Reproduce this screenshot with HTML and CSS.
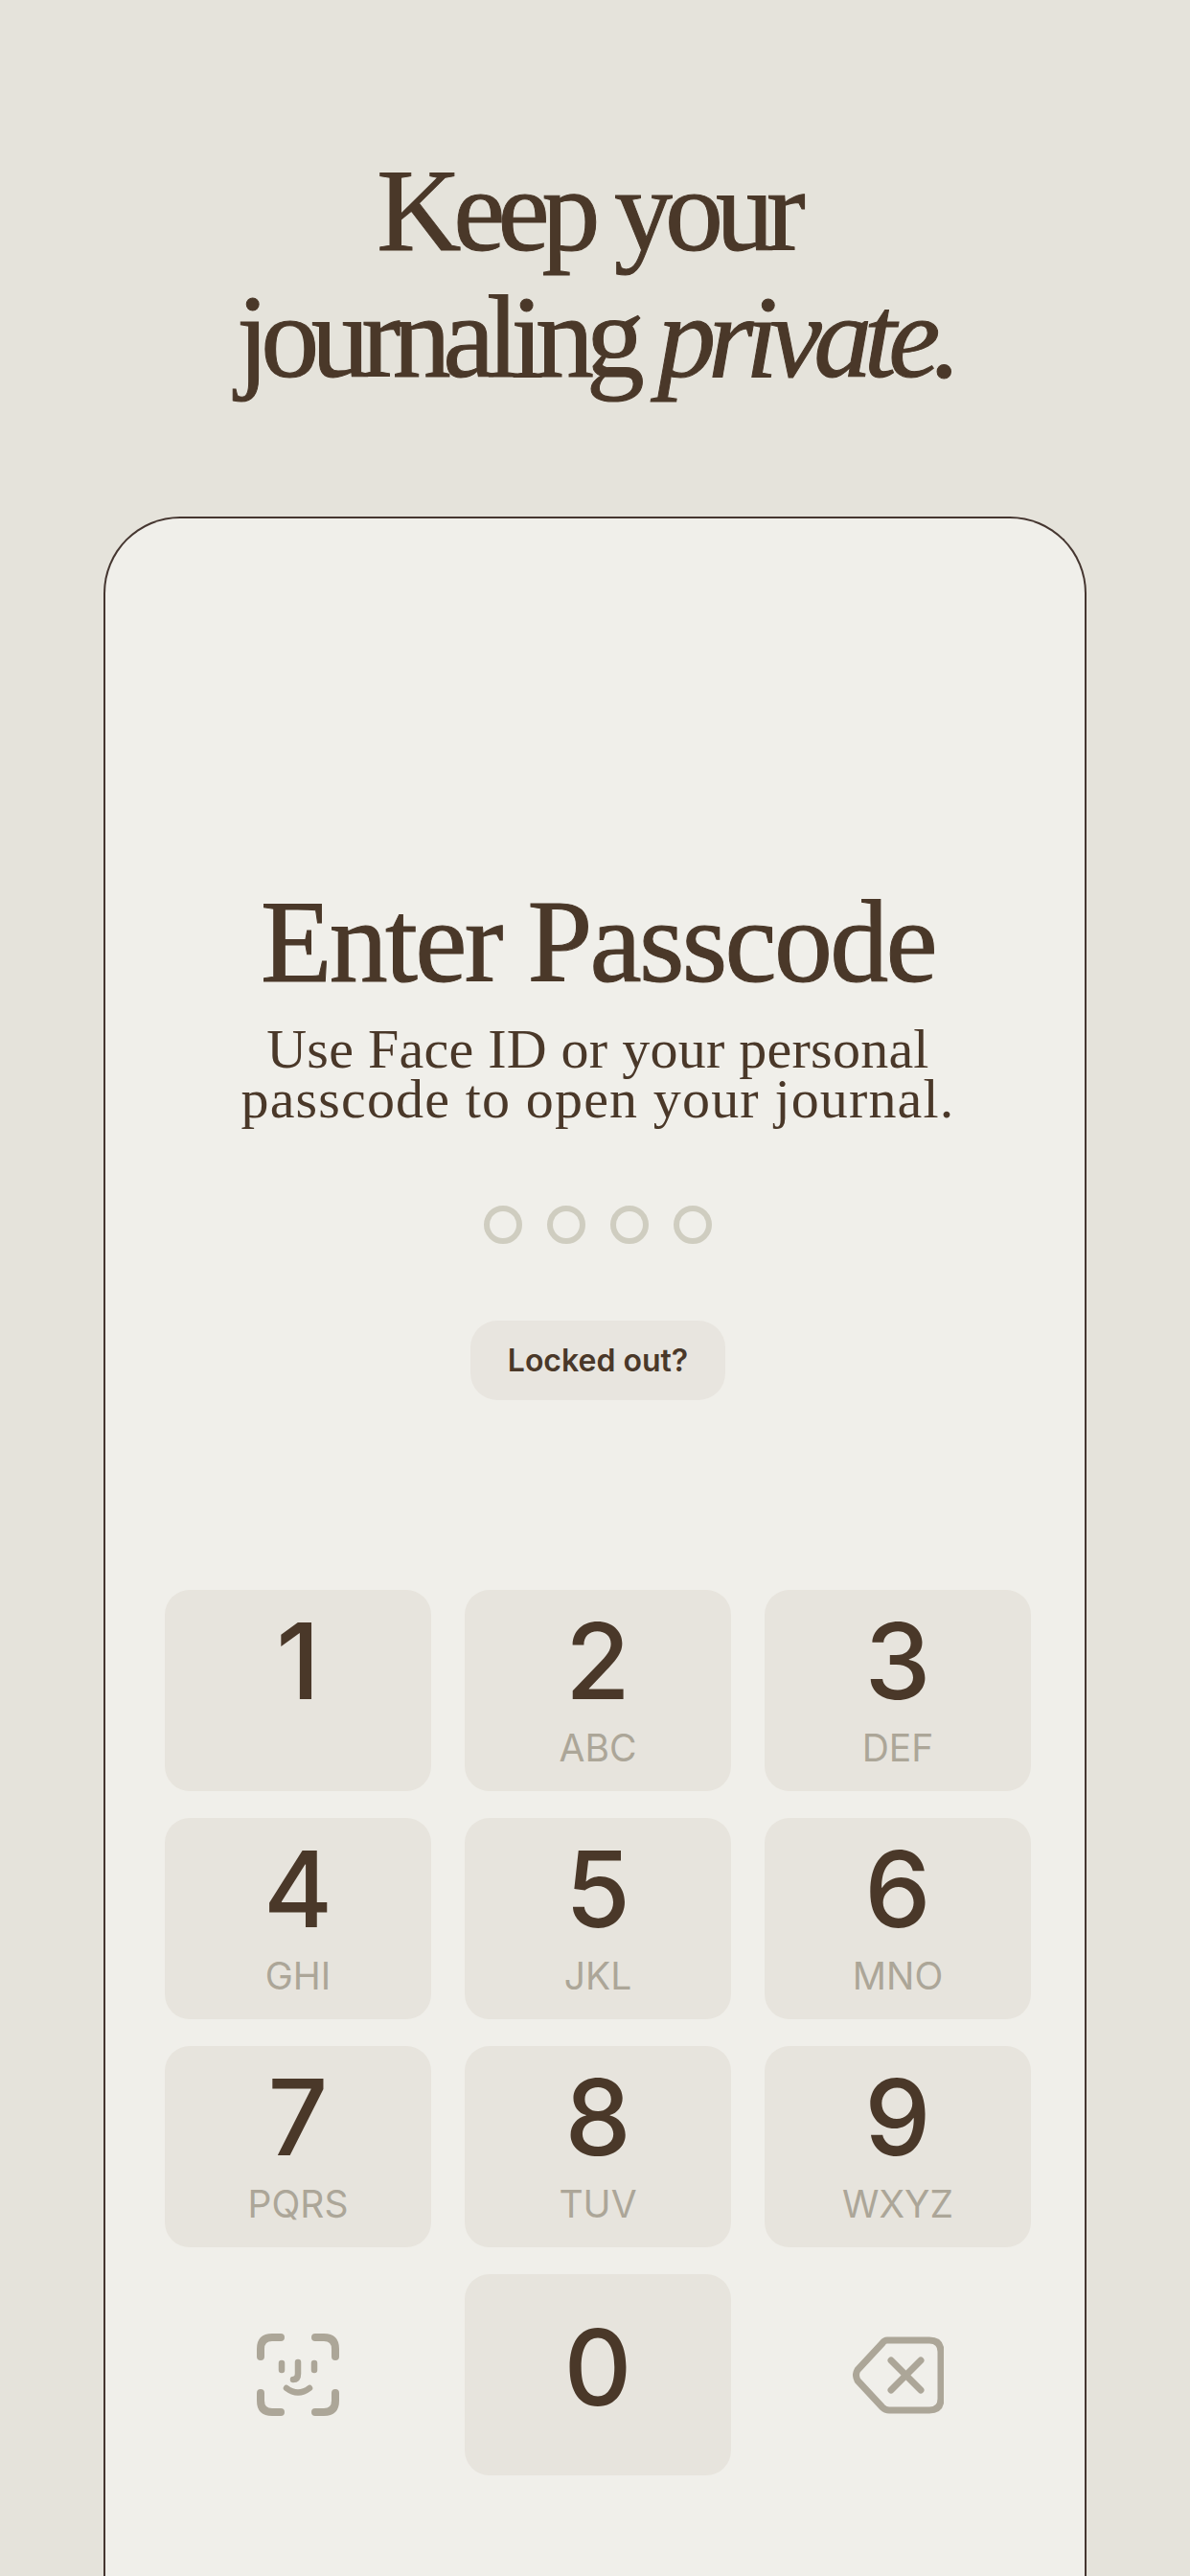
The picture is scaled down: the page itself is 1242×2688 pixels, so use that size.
FILE: index.html
```html
<!DOCTYPE html>
<html lang="en">
<head>
<meta charset="utf-8">
<title>Enter Passcode</title>
<link rel="stylesheet" href="styles.css">
</head>
<body>
<main class="page">
  <h1 class="headline"><span class="headline-first">Keep your</span><span class="headline-second">journaling <em>private.</em></span></h1>
  <section class="card">
    <h2 class="title">Enter Passcode</h2>
    <p class="subtitle"><span class="sub-first">Use Face ID or your personal</span><span class="sub-second">passcode to open your journal.</span></p>
    <div class="dots"><span class="dot"></span><span class="dot"></span><span class="dot"></span><span class="dot"></span></div>
    <button class="locked">Locked out?</button>
    <div class="keypad">
      <div class="key"><span class="digit">1</span></div>
      <div class="key"><span class="digit">2</span><span class="letters">ABC</span></div>
      <div class="key"><span class="digit">3</span><span class="letters">DEF</span></div>
      <div class="key"><span class="digit">4</span><span class="letters">GHI</span></div>
      <div class="key"><span class="digit">5</span><span class="letters">JKL</span></div>
      <div class="key"><span class="digit">6</span><span class="letters">MNO</span></div>
      <div class="key"><span class="digit">7</span><span class="letters">PQRS</span></div>
      <div class="key"><span class="digit">8</span><span class="letters">TUV</span></div>
      <div class="key"><span class="digit">9</span><span class="letters">WXYZ</span></div>
      <div class="key key-plain">
        <svg class="icon" width="86" height="86" viewBox="0 0 86 86" fill="none" stroke="#aca698" stroke-width="8" stroke-linecap="round" stroke-linejoin="round">
          <path d="M4 24V16Q4 4 16 4H25"/><path d="M61 4H70Q82 4 82 16V24"/><path d="M4 62V70Q4 82 16 82H25"/><path d="M61 82H70Q82 82 82 70V62"/>
          <path class="face-line" d="M26 31V38"/><path class="face-line" d="M60 31V38"/>
          <path class="face-line" d="M43 30V42Q43 48 38 48"/>
          <path class="face-line" d="M31 57Q43 66 55 57"/>
        </svg>
      </div>
      <div class="key key-zero"><span class="digit">0</span></div>
      <div class="key key-plain">
        <svg class="icon" width="95" height="81" viewBox="0 0 95 81" fill="none" stroke="#aca698" stroke-width="7" stroke-linecap="round" stroke-linejoin="round">
          <path d="M36 4H80Q92 4 92 16V65Q92 77 80 77H38Q34 77 31 74L5 46Q2 40 5 35L31 7Q33 4 36 4Z"/>
          <path d="M40 25L71 56"/><path d="M71 25L40 56"/>
        </svg>
      </div>
    </div>
  </section>
</main>
</body>
</html>
```
FILE: styles.css
```css
* { box-sizing: border-box; }
html, body { margin: 0; padding: 0; }
body { width: 1242px; height: 2688px; overflow: hidden; background: #e5e3db; }
.page { width: 1242px; height: 2688px; overflow: hidden; display: flex; flex-direction: column; align-items: center; color: #4a3829; }
.headline {
  margin: 154px 0 0;
  height: 385px;
  font-family: "Liberation Serif", serif;
  font-weight: 400;
  font-size: 122px;
  line-height: 132px;
  letter-spacing: -8px;
  text-align: center;
}
.headline-first { display: block; padding-right: 16px; -webkit-text-stroke: 1px #4a3829; }
.headline-second { display: block; letter-spacing: -8.4px; -webkit-text-stroke: 1px #4a3829; }
.headline em { font-style: italic; }
.card {
  width: 1026px;
  flex: 1;
  background: #f0efea;
  border: 2px solid #453630;
  border-bottom: 0;
  border-radius: 80px 80px 0 0;
  padding: 376px 0 0 6px;
  display: flex;
  flex-direction: column;
  align-items: center;
}
.title {
  margin: 0;
  font-family: "Liberation Serif", serif;
  font-weight: 400;
  font-size: 122px;
  line-height: 132px;
  letter-spacing: -2.7px;
  -webkit-text-stroke: 1px #4a3829;
}
.subtitle {
  margin: 20px 0 0;
  font-family: "Liberation Serif", serif;
  font-size: 58px;
  line-height: 52px;
  text-align: center;
}
.sub-first { display: block; letter-spacing: 0.25px; }
.sub-second { display: block; letter-spacing: 1.15px; }
.dots { display: flex; gap: 26px; margin-top: 85px; }
.dot { width: 40px; height: 40px; border-radius: 50%; border: 6px solid #cfcdc0; }
.locked {
  margin-top: 80px;
  width: 266px;
  height: 83px;
  border: 0;
  border-radius: 28px;
  background: #e8e5df;
  color: #4a3829;
  font-family: Inter, sans-serif;
  font-weight: 600;
  font-size: 32px;
}
.keypad {
  margin-top: 198px;
  display: grid;
  grid-template-columns: repeat(3, 278px);
  grid-auto-rows: 210px;
  column-gap: 35px;
  row-gap: 28px;
}
.key {
  background: #e7e4dd;
  border-radius: 26px;
  display: flex;
  flex-direction: column;
  align-items: center;
  padding-top: 8px;
}
.key-plain { background: transparent; justify-content: center; padding-top: 0; }
.key-zero { padding-top: 31px; }
.face-line { stroke-width: 6.5; }
.digit { font-family: Inter, sans-serif; font-size: 110px; line-height: 132px; font-weight: 450; color: #4a3829; }
.letters { margin-top: 3px; font-family: Inter, sans-serif; font-size: 39px; line-height: 44px; color: #aca698; }
.icon { display: block; }
```
